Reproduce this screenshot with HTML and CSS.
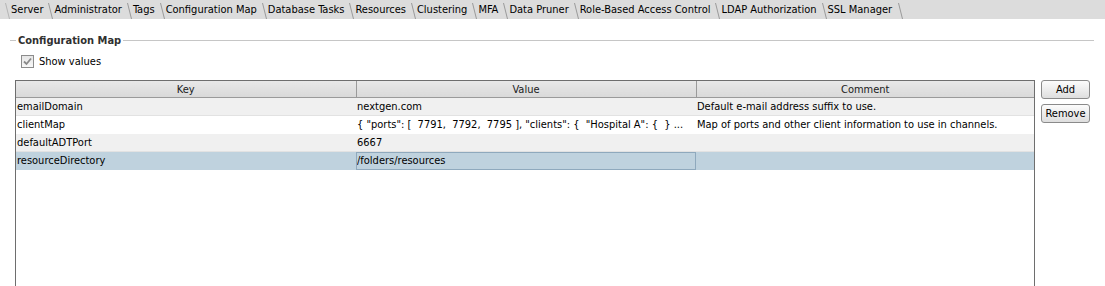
FILE: index.html
```html
<!DOCTYPE html>
<html>
<head>
<meta charset="utf-8">
<link rel="stylesheet" href="styles.css">
</head>
<body>
<div class="tabbar">
  <div class="tab">Server</div>
  <div class="tab">Administrator</div>
  <div class="tab">Tags</div>
  <div class="tab active">Configuration Map</div>
  <div class="tab">Database Tasks</div>
  <div class="tab">Resources</div>
  <div class="tab">Clustering</div>
  <div class="tab">MFA</div>
  <div class="tab">Data Pruner</div>
  <div class="tab">Role-Based Access Control</div>
  <div class="tab">LDAP Authorization</div>
  <div class="tab">SSL Manager</div>
</div>
<div class="panel">
  <div class="group-title">
    <span class="line-short"></span>
    <span class="title">Configuration Map</span>
    <span class="line-fill"></span>
  </div>
  <div class="check-row">
    <span class="checkbox">
      <svg width="9" height="9" viewBox="0 0 9 9"><path d="M1 4.5 L3.5 7 L8 1.5" fill="none" stroke="#8a8a8a" stroke-width="1.8"/></svg>
    </span>
    <span class="check-label">Show values</span>
  </div>
  <div class="content">
    <div class="table-box">
      <table class="grid">
        <colgroup><col class="c1"><col class="c2"><col class="c3"></colgroup>
        <thead>
          <tr><th>Key</th><th>Value</th><th class="last">Comment</th></tr>
        </thead>
        <tbody>
          <tr class="alt"><td>emailDomain</td><td>nextgen.com</td><td>Default e-mail address suffix to use.</td></tr>
          <tr><td>clientMap</td><td>{ "ports": [ &nbsp;7791, &nbsp;7792, &nbsp;7795 ], "clients": { &nbsp;"Hospital A": { &nbsp;} ...</td><td>Map of ports and other client information to use in channels.</td></tr>
          <tr class="alt"><td>defaultADTPort</td><td>6667</td><td></td></tr>
          <tr class="sel"><td>resourceDirectory</td><td class="focus">/folders/resources</td><td></td></tr>
        </tbody>
      </table>
    </div>
    <div class="buttons">
      <button class="btn">Add</button>
      <button class="btn">Remove</button>
    </div>
  </div>
</div>
</body>
</html>
```

FILE: styles.css
```css
html, body {
  margin: 0;
  padding: 0;
  background: #ffffff;
  font-family: "DejaVu Sans Condensed", "DejaVu Sans", sans-serif;
  font-size: 11px;
  color: #000;
  overflow: hidden;
}

.tabbar {
  display: flex;
  height: 19px;
  background: #dcdcdc;
  padding-left: 6px;
  align-items: flex-end;
}

.tab {
  position: relative;
  height: 17px;
  line-height: 16px;
  padding: 0 6px 0 5px;
  white-space: nowrap;
  color: #000;
}

.tab::before {
  content: "";
  position: absolute;
  left: -1px;
  top: 1px;
  bottom: 0;
  width: 0;
  border-left: 1px solid #9a9a9a;
  transform: skewX(14deg);
  transform-origin: top left;
}

.tab:first-child::before {
  border-left-color: #b5b5b5;
}

.tab:last-child::after {
  content: "";
  position: absolute;
  right: -1px;
  top: 1px;
  bottom: 0;
  width: 0;
  border-left: 1px solid #9a9a9a;
  transform: skewX(14deg);
  transform-origin: top left;
}

.panel {
  padding: 0 0 0 10px;
}

.group-title {
  display: flex;
  align-items: center;
  height: 14px;
  margin-top: 14px;
}

.line-short {
  width: 6px;
  border-top: 1px solid #c6c6c6;
}

.title {
  font-weight: bold;
  color: #303030;
  padding: 0 2px 0 2px;
}

.line-fill {
  width: 971px;
  border-top: 1px solid #c6c6c6;
}

.check-row {
  display: flex;
  align-items: center;
  height: 14px;
  margin-top: 7px;
  padding-left: 11px;
}

.checkbox {
  box-sizing: border-box;
  width: 13px;
  height: 13px;
  border: 1px solid #8c8c8c;
  background: linear-gradient(#e6e6e6, #f8f8f8);
  display: flex;
  align-items: center;
  justify-content: center;
}

.check-label {
  margin-left: 5px;
}

.content {
  display: flex;
  margin-top: 12px;
  padding-left: 5px;
}

.table-box {
  box-sizing: border-box;
  width: 1020px;
  height: 220px;
  border: 1px solid #6e6e6e;
  border-bottom: none;
  background: #fff;
}

.grid {
  width: 100%;
  border-collapse: collapse;
  table-layout: fixed;
}

.c1 { width: 340px; }
.c2 { width: 340px; }
.c3 { width: auto; }

.grid th {
  height: 16px;
  padding: 0;
  font-weight: normal;
  text-align: center;
  background: linear-gradient(#e8e8e8, #d9d9d9);
  border-right: 1px solid #9a9a9a;
  border-bottom: 1px solid #9a9a9a;
  color: #202020;
}

.grid th.last {
  border-right: none;
}

.grid td {
  height: 18px;
  padding: 0 0 0 1px;
  white-space: nowrap;
  overflow: hidden;
  border-bottom: 1px solid #ffffff;
  box-sizing: border-box;
}

.grid tr.alt td {
  background: #f0f0f0;
  border-bottom-color: #e2e2e2;
}

.grid tr.sel td {
  background: #bfd2de;
  border-bottom-color: #bfd2de;
}

.grid td.focus {
  outline: 1px solid #8fa9bd;
  outline-offset: -1px;
}

.buttons {
  display: flex;
  flex-direction: column;
  gap: 5px;
  margin-left: 6px;
}

.btn {
  box-sizing: border-box;
  width: 49px;
  height: 19px;
  padding: 0;
  font-family: inherit;
  font-size: 11px;
  color: #000;
  border: 1px solid #8a8a8a;
  border-radius: 3px;
  background: linear-gradient(#fcfcfc, #dedede);
}
```
